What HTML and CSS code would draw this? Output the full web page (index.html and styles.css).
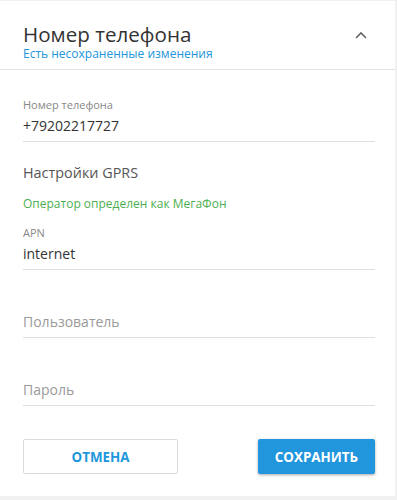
FILE: index.html
```html
<!DOCTYPE html>
<html lang="ru">
<head>
<meta charset="utf-8">
<link rel="stylesheet" href="styles.css">
</head>
<body>
<div class="card">
  <div class="header">
    <div class="header-top">
      <div class="title">Номер телефона</div>
      <svg class="chevron" width="12" height="8" viewBox="0 0 12 8"><path d="M1 7 L6 2 L11 7" fill="none" stroke="#666" stroke-width="1.6"/></svg>
    </div>
    <div class="subtitle">Есть несохраненные изменения</div>
  </div>
  <div class="body">
    <div class="field first">
      <div class="label">Номер телефона</div>
      <div class="value">+79202217727</div>
    </div>
    <div class="section-title">Настройки GPRS</div>
    <div class="operator">Оператор определен как МегаФон</div>
    <div class="field apn">
      <div class="label">APN</div>
      <div class="value">internet</div>
    </div>
    <div class="field">
      <div class="label"></div>
      <div class="value placeholder">Пользователь</div>
    </div>
    <div class="field">
      <div class="label"></div>
      <div class="value placeholder">Пароль</div>
    </div>
    <div class="actions">
      <button class="btn btn-cancel">ОТМЕНА</button>
      <button class="btn btn-save">СОХРАНИТЬ</button>
    </div>
  </div>
</div>
</body>
</html>
```
FILE: styles.css
```css
html, body {
  margin: 0;
  padding: 0;
}
body {
  background: #f0f0f0;
  font-family: "Open Sans", "Noto Sans", sans-serif;
  padding-top: 1px;
  height: 500px;
  box-sizing: border-box;
  overflow: hidden;
}
.card {
  background: #fff;
  width: 395px;
  height: 495px;
  box-sizing: border-box;
}
.header {
  padding: 21px 20px 8px 23px;
  border-bottom: 1px solid #e2e2e2;
}
.header-top {
  display: flex;
  align-items: center;
  justify-content: space-between;
}
.title {
  font-size: 20.6px;
  line-height: 25px;
  color: #333;
}
.chevron {
  margin-right: 8px;
  margin-top: 1px;
}
.subtitle {
  font-size: 12px;
  line-height: 14px;
  color: #2196dc;
}
.body {
  padding: 28px 20px 0 23px;
}
.field {
  margin-top: 24px;
}
.field.first {
  margin-top: 0;
}
.field.apn {
  margin-top: 14px;
}
.label {
  font-size: 11px;
  line-height: 14px;
  height: 14px;
  color: #888;
  margin-bottom: 4px;
}
.value {
  font-size: 14px;
  line-height: 20px;
  color: #333;
  padding-bottom: 5px;
  border-bottom: 1px solid #e0e0e0;
}
.value.placeholder {
  color: #9a9a9a;
}
.section-title {
  margin-top: 21px;
  font-size: 14.4px;
  line-height: 20px;
  color: #555;
}
.operator {
  margin-top: 13px;
  font-size: 12px;
  line-height: 16px;
  color: #4caf50;
}
.actions {
  margin-top: 33px;
  display: flex;
  justify-content: space-between;
}
.btn {
  height: 35px;
  font-family: "Open Sans", "Noto Sans", sans-serif;
  font-weight: bold;
  font-size: 13.4px;
  border-radius: 2px;
  padding: 0;
  cursor: pointer;
}
.btn-cancel {
  width: 155px;
  background: #fff;
  color: #2196dc;
  border: 1px solid #dcdcdc;
}
.btn-save {
  width: 117px;
  background: #2196dc;
  color: #fff;
  border: none;
  box-shadow: 0 1px 3px rgba(0, 0, 0, 0.35);
}
```
